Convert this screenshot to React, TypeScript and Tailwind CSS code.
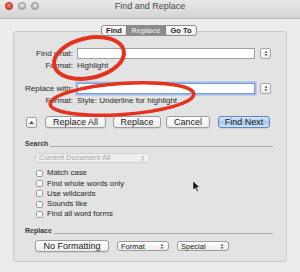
import React from 'react';

const FONT = { fontFamily: '"Liberation Sans", Arial, sans-serif' };

function Btn({ w, children, blue }: { w: string; children: React.ReactNode; blue?: boolean }) {
  return (
    <div
      className={`${w} h-[12px] flex items-center justify-center rounded-[3px] border text-[9px] leading-none text-[#1a1a1a] shadow-[0_1px_0_rgba(0,0,0,0.08)] ${
        blue
          ? 'border-[#5f87c4] bg-gradient-to-b from-[#dbe8fa] via-[#a9c8f0] to-[#cfe1f8]'
          : 'border-[#9c9c9c] bg-gradient-to-b from-[#ffffff] to-[#ececec]'
      }`}
    >
      {children}
    </div>
  );
}

function Arrows({ color = '#444' }: { color?: string }) {
  return (
    <svg width="4" height="7" viewBox="0 0 4 7">
      <path d="M0.5 2.8 L2 1 L3.5 2.8 Z" fill={color} />
      <path d="M0.5 4.2 L2 6 L3.5 4.2 Z" fill={color} />
    </svg>
  );
}

function Popup({ w, label, disabled }: { w: string; label: string; disabled?: boolean }) {
  return (
    <div
      className={`${w} h-[10px] flex items-center justify-between rounded-[3px] border pl-[3px] pr-[4px] text-[7.5px] leading-none ${
        disabled
          ? 'border-[#cfcfcf] bg-[#eeeeee] text-[#a8a8a8]'
          : 'border-[#9c9c9c] bg-gradient-to-b from-[#ffffff] to-[#ededed] text-[#1a1a1a]'
      }`}
    >
      <span>{label}</span>
      <Arrows color={disabled ? '#aaa' : '#444'} />
    </div>
  );
}

function Stepper() {
  return (
    <div className="ml-[5px] w-[11px] h-[11px] flex items-center justify-center rounded-[2px] border border-[#a5a5a5] bg-gradient-to-b from-[#ffffff] to-[#eaeaea]">
      <Arrows />
    </div>
  );
}

function Check({ label }: { label: string }) {
  return (
    <div className="h-[10.3px] flex items-center">
      <div className="ml-[22px] w-[7px] h-[7px] rounded-[1.5px] border border-[#9a9a9a] bg-gradient-to-b from-[#ffffff] to-[#efefef]" />
      <span className="ml-[4px] text-[7.8px] leading-none text-[#1f1f1f]">{label}</span>
    </div>
  );
}

export default function App() {
  return (
    <div className="relative w-[300px] h-[272px] overflow-hidden bg-[#ececec]" style={FONT}>
      {/* title bar */}
      <div className="relative h-[19px] flex items-center justify-center border-b border-[#b8b8b8] bg-gradient-to-b from-[#e9e9e9] to-[#d4d4d4]">
        <div className="absolute left-[5px] top-[2px] flex gap-[5px]">
          <div className="w-[8px] h-[8px] rounded-full bg-[radial-gradient(circle_at_50%_35%,#ff8a7a,#d8281c)] border border-[#a8261c]" />
          <div className="w-[8px] h-[8px] rounded-full bg-[radial-gradient(circle_at_50%_35%,#e6e6e6,#a9a9a9)] border border-[#8f8f8f]" />
          <div className="w-[8px] h-[8px] rounded-full bg-[radial-gradient(circle_at_50%_35%,#e6e6e6,#a9a9a9)] border border-[#8f8f8f]" />
        </div>
        <span className="-mt-[4px] text-[9px] text-[#4a4a4a]">Find and Replace</span>
      </div>

      {/* tabs */}
      <div className="relative z-10 mt-[6px] flex justify-center">
        <div className="ml-[-2px] flex h-[11px] rounded-[3px] border border-[#8e8e8e] bg-gradient-to-b from-[#ffffff] to-[#e9e9e9] text-[7.5px] font-bold leading-none overflow-hidden">
          <div className="w-[24px] flex items-center justify-center text-[#2a2a2a]">Find</div>
          <div className="w-[40px] flex items-center justify-center bg-[#8c8c8c] text-[#dedede] border-x border-[#7a7a7a]">Replace</div>
          <div className="w-[30px] flex items-center justify-center text-[#2a2a2a]">Go To</div>
        </div>
      </div>

      {/* panel */}
      <div className="mx-[13px] -mt-[5px] h-[231px] rounded-[3px] border border-[#c9c9c9] bg-[#e3e3e3] flex flex-col text-[8px] text-[#2a2a2a]">
        <div className="mt-[16px] h-[11px] flex items-center">
          <span className="w-[59px] text-right leading-none">Find what:</span>
          <div className="ml-[4px] w-[178px] h-[11px] border border-[#9f9f9f] bg-white" />
          <Stepper />
        </div>
        <div className="mt-[1px] h-[12px] flex items-center">
          <span className="w-[59px] text-right leading-none">Format:</span>
          <span className="ml-[4px] leading-none">Highlight</span>
        </div>

        <div className="mt-[11px] h-[11px] flex items-center">
          <span className="w-[59px] text-right leading-none whitespace-nowrap">Replace with:</span>
          <div className="ml-[4px] w-[178px] h-[11px] border border-[#7f9fce] bg-white shadow-[0_0_0_1.5px_#9cbde9]" />
          <Stepper />
        </div>
        <div className="mt-[1px] h-[12px] flex items-center">
          <span className="w-[59px] text-right leading-none">Format:</span>
          <span className="ml-[4px] leading-none">Style: Underline for highlight</span>
        </div>

        <div className="mt-[9px] h-[12px] flex items-center">
          <div className="ml-[12px] w-[11px] h-[11px] flex items-center justify-center rounded-[2px] border border-[#a0a0a0] bg-gradient-to-b from-[#ffffff] to-[#e8e8e8]">
            <svg width="5" height="3" viewBox="0 0 5 3">
              <path d="M0 3 L2.5 0 L5 3 Z" fill="#555" />
            </svg>
          </div>
          <div className="ml-[8px]">
            <Btn w="w-[61px]">Replace All</Btn>
          </div>
          <div className="ml-[7px]">
            <Btn w="w-[48px]">Replace</Btn>
          </div>
          <div className="ml-[5px]">
            <Btn w="w-[44px]">Cancel</Btn>
          </div>
          <div className="ml-[8px]">
            <Btn w="w-[52px]" blue>
              Find Next
            </Btn>
          </div>
        </div>

        <div className="mt-[9px] h-[12px] flex items-start mr-[13px]">
          <span className="ml-[11px] mt-[3px] text-[7px] font-bold leading-none text-[#3a3a3a]">Search</span>
          <div className="ml-[2px] mt-[9px] flex-1 h-px bg-[#a9a9a9]" />
        </div>

        <div className="mt-[4px] ml-[21px]">
          <Popup w="w-[115px]" label="Current Document All" disabled />
        </div>

        <div className="mt-[5px] flex flex-col">
          <Check label="Match case" />
          <Check label="Find whole words only" />
          <Check label="Use wildcards" />
          <Check label="Sounds like" />
          <Check label="Find all word forms" />
        </div>

        <div className="mt-[5px] h-[12px] flex items-start mr-[13px]">
          <span className="ml-[11px] mt-[3px] text-[7px] font-bold leading-none text-[#3a3a3a]">Replace</span>
          <div className="ml-[2px] mt-[9px] flex-1 h-px bg-[#a9a9a9]" />
        </div>

        <div className="mt-[4px] h-[12px] flex items-center">
          <div className="ml-[21px]">
            <Btn w="w-[74px]">No Formatting</Btn>
          </div>
          <div className="ml-[8px]">
            <Popup w="w-[52px]" label="Format" />
          </div>
          <div className="ml-[8px]">
            <Popup w="w-[52px]" label="Special" />
          </div>
        </div>
      </div>

      {/* annotations */}
      <svg className="absolute inset-0 pointer-events-none" width="300" height="272" viewBox="0 0 300 272">
        <ellipse cx="89" cy="58" rx="35.5" ry="20" transform="rotate(-12 89 58)" fill="none" stroke="#e5321e" strokeWidth="4" />
        <ellipse cx="122" cy="99" rx="72" ry="15.5" transform="rotate(-4 122 99)" fill="none" stroke="#e5321e" strokeWidth="3.5" />
        <path d="M193 181 L193 190 L195.2 188 L197 191.5 L198.3 190.8 L196.6 187.4 L199.5 187.2 Z" fill="#111" stroke="#fff" strokeWidth="0.5" />
      </svg>
    </div>
  );
}
